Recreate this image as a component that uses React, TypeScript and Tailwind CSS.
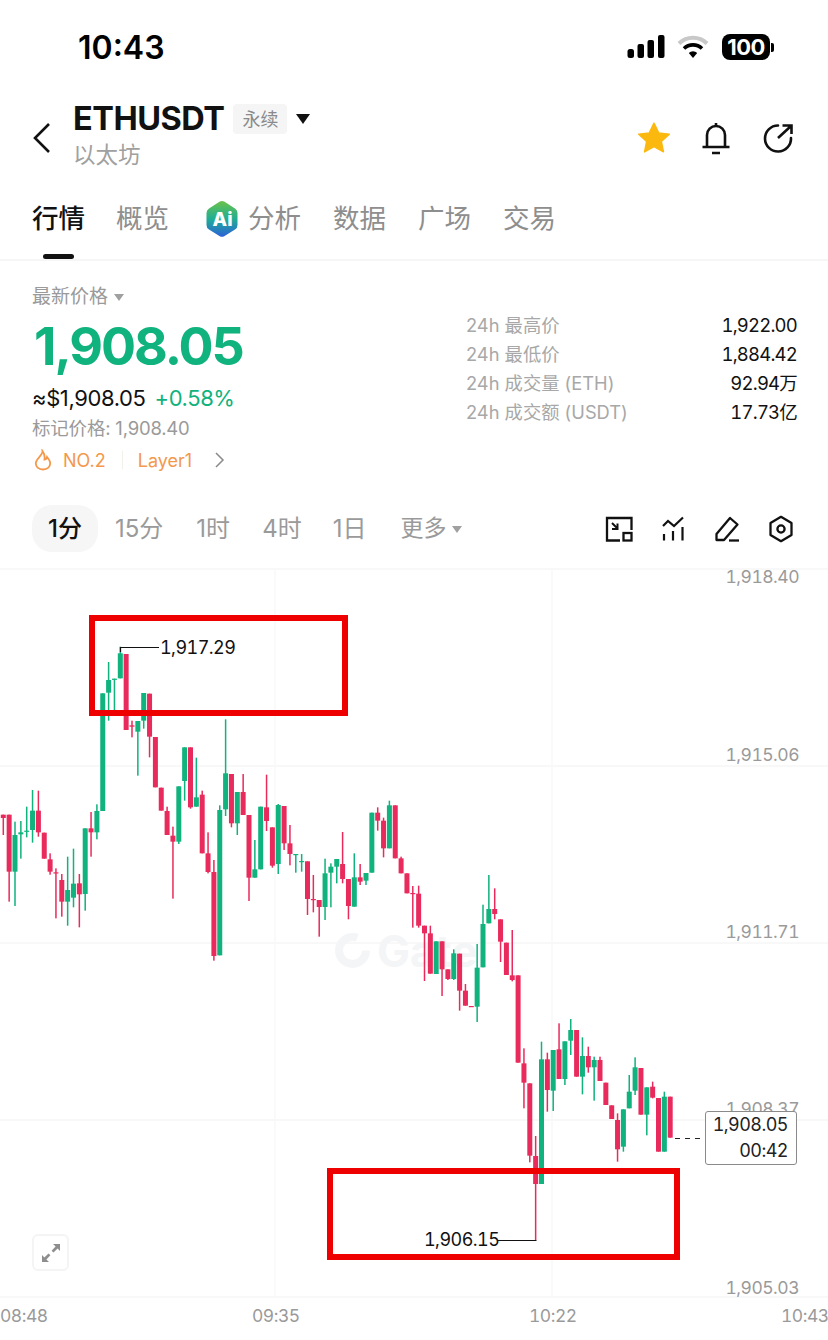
import React from "react";

type C = [string, number, number, number?, number?];
const a: C[] = [
["r",644,654,644,705],["r",644,815,644,905],["g",705,815,665,918],["g",697,703,663,776],["g",692,694,620,712],["g",632,690,570,728],["r",632,697,572,710],["r",698,776],["r",778,815,760,824],["r",817,820,805,955],["r",840,905,822,950],["g",870,905,770,977],["g",851,893,746,922],["r",850,883,822,982],["g",685,882,685,932],["r",685,697,636,770],["g",633,697,613,718],["g",280,633],["g",240,278,186,362],["g",236,238,236,340],["g",160,235,140,235],["r",162,390],["r",376,380,362,412],["g",363,395,363,527],["g",279,362,279,386],["r",281,410,281,472],["r",411,562],["r",563,632],["r",633,705,620,705],["r",707,725,680,896],["g",559,725,559,732],["g",442,543,442,602],["r",442,622,442,626],["g",592,620,473,620],["r",584,760,572,760],["r",760,816,697,820],["r",816,1068,780,1082],["g",630,1066,616,1066],["g",520,628,358,648],["r",522,670,522,682],["g",576,670,576,705],["r",576,645,522,645],["r",645,833,645,903],["g",808,833,720,833],["g",620,808],["r",622,663,524,693],["r",682,797,682,803],
];
const b: C[] = [
["g",75,252,72,282],["r",78,190,78,210],["r",190,222,135,256],["g",222,224,222,278],["g",243,246,222,275],["r",244,357,244,405],["r",357,360,285,397],["r",360,381,360,470],["g",280,381,236,420],["g",260,278,250,382],["g",237,260,237,310],["r",252,297,156,310],["r",297,378,297,418],["g",292,380,220,380],["r",292,305,252,315],["g",279,302,279,315],["g",98,278],["r",98,122,82,152],["r",122,205,113,232],["g",76,205,62,205],["r",76,235],["r",235,280,230,280],["r",280,340],["r",339,341,318,443],["r",341,437,317,443],["r",437,460,437,603],["r",460,581,437,581],["g",484,582],["r",484,568,484,648],["r",568,597,568,600],["g",520,597,508,600],["r",521,632,521,692],["r",632,677,612,677],["r",678,681],["g",563,680,492,726],["g",432,562,374,562],["g",387,430,285,430],["r",387,402,325,418],["r",418,485,418,546],["r",488,585],["r",586,600,450,604],
];
const c: C[] = [
["r",-74,188],["r",190,248,145,325],["r",250,467,250,487],["r",468,552,408,720],["g",178,552,125,552],["r",178,270,158,335],["g",150,272,150,333],["r",148,237,70,237],["g",124,237,124,255],["g",90,122,57,165],["r",90,230],["g",168,230,112,283],["r",168,202,140,218],["g",180,202,170,302],["r",180,243,170,243],["r",248,315],["r",316,357],["r",360,448,340,485],["g",328,440,328,455],["g",275,325,225,325],["g",202,272,172,285],["r",204,344],["g",262,344,262,406],["r",260,293,245,295],["r",294,455],["g",290,455,275,455],["r",290,413],
];
const scale = (list: C[], base: number) =>
  list.map(([k, t, bt, wt, wb]) => ({
    k,
    t: base + t / 3,
    b: base + bt / 3,
    wt: base + (wt ?? t) / 3,
    wb: base + (wb ?? bt) / 3,
  }));
const candles = [...scale(a, 600), ...scale(b, 780), ...scale(c, 1000)];

const GREEN = "#10b27d";
const RED = "#e82b5c";

function Chart() {
  return (
    <svg width="828" height="774" viewBox="0 566 828 774" className="block">
      {[569, 766, 943, 1120, 1297].map((y) => (
        <line key={y} x1="0" x2="828" y1={y} y2={y} stroke="#f6f6f6" strokeWidth="1.5" />
      ))}
      {[275, 552].map((x) => (
        <line key={x} x1={x} x2={x} y1="569" y2="1297" stroke="#f9f9f9" strokeWidth="1.5" />
      ))}
      <circle cx="352.5" cy="950.5" r="13.5" fill="none" stroke="#f4f5f6" strokeWidth="8" strokeDasharray="68 17" />
      <text x="377" y="967" fontSize="44" fontWeight="700" fill="#f4f5f6" fontFamily="Inter, sans-serif">Gate</text>
      {candles.map((d, i) => {
        const x = 3.3 + 5.85 * i;
        const col = d.k === "g" ? GREEN : RED;
        return (
          <g key={i} fill={col}>
            <rect x={x - 0.75} y={d.wt} width="1.5" height={Math.max(d.wb - d.wt, 0.5)} />
            <rect x={x - 2.5} y={d.t} width="5" height={Math.max(d.b - d.t, 1.2)} />
          </g>
        );
      })}
      <path d="M120.5 652V647.5H159" fill="none" stroke="#111" strokeWidth="1.2" />
      <path d="M498 1240.5H536.5" fill="none" stroke="#111" strokeWidth="1.2" />
      <line x1="675" x2="705" y1="1138.5" y2="1138.5" stroke="#222" strokeWidth="1.1" strokeDasharray="5 5" />
    </svg>
  );
}

function AiLogo() {
  return (
    <svg width="36" height="38" viewBox="0 0 36 38">
      <defs>
        <linearGradient id="ai" x1="0" y1="0" x2="0" y2="1">
          <stop offset="0" stopColor="#6cc24a" />
          <stop offset="0.5" stopColor="#1fae94" />
          <stop offset="1" stopColor="#2c62d8" />
        </linearGradient>
      </defs>
      <path d="M15.8 1.6 Q18 0.6 20.2 1.6 L31 8.5 Q33.5 10 33.5 13 V25 Q33.5 28 31 29.5 L20.2 36.2 Q18 37.4 15.8 36.2 L5 29.5 Q2.5 28 2.5 25 V13 Q2.5 10 5 8.5 Z" fill="url(#ai)" />
      <text x="8.5" y="26" fontSize="19" fontWeight="800" fill="#fff" fontFamily="Inter, sans-serif">Ai</text>
    </svg>
  );
}

function Tri({ cls }: { cls: string }) {
  return <span className={`inline-block border-x-transparent border-t-solid ${cls}`} />;
}

const Stat = ({ l, v }: { l: string; v: string }) => (
  <div className="flex h-[29px] items-center justify-between">
    <span className="text-[18.3px] text-[#a8a8a8]">{l}</span>
    <span className="text-[18.5px] tabular-nums tracking-[-0.8px] text-[#111]">{v}</span>
  </div>
);

const Axis = ({ cls, t }: { cls: string; t: string }) => (
  <span className={`absolute text-[17.5px] leading-[22px] tabular-nums tracking-[-0.5px] text-[#9a9a9a] ${cls}`}>{t}</span>
);

export default function App() {
  return (
    <div className="relative h-[1340px] w-[828px] overflow-hidden bg-white font-[Inter,'Noto_Sans_CJK_SC',sans-serif]">
      <div className="flex h-[94px] items-center justify-between pl-[78px] pr-[54px]">
        <span className="pt-[2px] text-[32px] font-semibold leading-none text-black">10:43</span>
        <div className="flex items-center">
          <svg width="38" height="24" viewBox="0 0 38 24" className="mr-[12px]">
            <rect x="0.5" y="14" width="6.5" height="9" rx="2.5" />
            <rect x="10.5" y="9" width="6.5" height="14" rx="2" />
            <rect x="20.5" y="5" width="6.5" height="18" rx="2" />
            <rect x="31" y="0" width="6.5" height="23" rx="2" />
          </svg>
          <svg width="32" height="24" viewBox="0 0 32 24" className="mr-[13px]">
            <path d="M2 8.5 A20 20 0 0 1 30 8.5" fill="none" stroke="#c8c8c8" strokeWidth="4" />
            <path d="M7 13.5 A13 13 0 0 1 25 13.5" fill="none" stroke="#000" strokeWidth="3.6" />
            <path d="M11.8 18 A6 6 0 0 1 20.2 18 L16 23 Z" fill="#000" />
          </svg>
          <div className="flex h-[26px] w-[48px] items-center justify-center rounded-[8px] bg-black text-[22px] font-bold leading-none tracking-[-0.5px] text-white">100</div>
          <div className="ml-[1px] h-[9px] w-[3px] rounded-r-[2px] bg-black" />
        </div>
      </div>

      <div className="flex h-[92px] items-start">
        <svg width="20" height="32" viewBox="0 0 20 32" className="ml-[32px] mt-[28px] text-[#111]">
          <path d="M17 2 L3 16 L17 30" fill="none" stroke="currentColor" strokeWidth="2.6" />
        </svg>
        <div className="ml-[21px] flex flex-col">
          <div className="flex h-[50px] items-center">
            <span className="text-[32.5px] font-bold leading-none tracking-[-0.5px] text-[#111]">ETHUSDT</span>
            <span className="ml-[9px] flex h-[30px] w-[54px] items-center justify-center rounded-[4px] bg-[#f5f5f5] text-[18px] text-[#8a8a8a]">永续</span>
            <Tri cls="ml-[9px] border-x-[7px] border-t-[10px] border-t-[#111]" />
          </div>
          <span className="text-[22.5px] leading-[22px] text-[#a0a0a0]">以太坊</span>
        </div>
        <div className="ml-auto mr-[35px] mt-[27px] flex items-center">
          <svg width="34" height="34" viewBox="0 0 24 24" className="mr-[30px]">
            <path d="M12 1.5 L15.3 8.4 L22.8 9.3 L17.2 14.4 L18.7 21.8 L12 18.1 L5.3 21.8 L6.8 14.4 L1.2 9.3 L8.7 8.4 Z" fill="#fbb80f" stroke="#fbb80f" strokeLinejoin="round" />
          </svg>
          <svg width="30" height="34" viewBox="0 0 30 34" className="mr-[32px]">
            <path d="M6 26 V14 a9 9 0 0 1 18 0 V26" fill="none" stroke="#111" strokeWidth="2.6" />
            <path d="M1.5 26 H28.5 M11 32 H19 M15 5 V2" fill="none" stroke="#111" strokeWidth="2.6" />
          </svg>
          <svg width="30" height="30" viewBox="0 0 30 30">
            <path d="M28 15 A13 13 0 1 1 15 2.5" fill="none" stroke="#111" strokeWidth="2.6" strokeLinecap="round" />
            <path d="M15 15 L28 3 M19.5 2.5 H28.5 V11" fill="none" stroke="#111" strokeWidth="2.6" />
          </svg>
        </div>
      </div>

      <div className="relative flex h-[75px] items-center border-b-2 border-[#f6f6f6] pb-[8px] pl-[32px] text-[26.5px] leading-none text-[#8e8e8e]">
        <span className="font-medium text-[#111]">行情</span>
        <span className="ml-[31px]">概览</span>
        <span className="ml-[35px] mr-[8px]"><AiLogo /></span>
        <span>分析</span>
        <span className="ml-[32px]">数据</span>
        <span className="ml-[32px]">广场</span>
        <span className="ml-[32px]">交易</span>
        <div className="absolute bottom-[0px] left-[43px] h-[5px] w-[31px] rounded-[3px] bg-[#111]" />
      </div>

      <div className="flex h-[244px]">
        <div className="ml-[32px] flex w-[300px] flex-col">
          <div className="mt-[24px] flex h-[24px] items-center text-[19px] text-[#9a9a9a]">
            最新价格
            <Tri cls="ml-[6px] mt-[1px] border-x-[5.5px] border-t-[7px] border-t-[#a0a0a0]" />
          </div>
          <div className="ml-[2px] mt-[10px] h-[56px] text-[52px] font-bold leading-[56px] tracking-[-2px] text-[#10b27d]">1,908.05</div>
          <div className="mt-[9px] flex h-[28px] items-center text-[22px] tracking-[-0.4px]">
            <span className="text-[#111]">≈$1,908.05</span>
            <span className="ml-[9px] text-[#10b27d]">+0.58%</span>
          </div>
          <div className="mt-[3px] h-[26px] text-[18.5px] leading-[26px] tracking-[-0.2px] text-[#9a9a9a]">标记价格: 1,908.40</div>
          <div className="mt-[5px] flex h-[28px] items-center text-[18px] text-[#f4984c]">
            <svg width="20" height="22" viewBox="0 0 20 22" className="ml-[1px]">
              <path d="M9.5 2 C10 6 4 9 3 13 C2 18 6 20.5 10 20.5 C14 20.5 18 18 17 13 C16.5 10.5 15 9.5 14 8 C13.5 10 12.5 10.5 11.5 10.5 C12 7 11 4 9.5 2 Z" fill="none" stroke="#f4984c" strokeWidth="1.8" />
            </svg>
            <span className="ml-[10px]">NO.2</span>
            <span className="ml-[16px] h-[18px] w-px bg-[#f3efe9]" />
            <span className="ml-[15px]">Layer1</span>
            <svg width="12" height="18" viewBox="0 0 12 18" className="ml-[22px]">
              <path d="M2 2 L9 9 L2 16" fill="none" stroke="#8a8a8a" strokeWidth="1.5" />
            </svg>
          </div>
        </div>
        <div className="ml-[134px] mt-[50px] w-[331px]">
          <Stat l="24h 最高价" v="1,922.00" />
          <Stat l="24h 最低价" v="1,884.42" />
          <Stat l="24h 成交量 (ETH)" v="92.94万" />
          <Stat l="24h 成交额 (USDT)" v="17.73亿" />
        </div>
      </div>

      <div className="flex h-[47px] items-center pl-[32px] text-[24px] leading-none text-[#9a9a9a]">
        <span className="flex h-[47px] w-[66px] items-center justify-center rounded-[20px] bg-[#f6f6f6] font-medium text-[#111]">1分</span>
        <span className="ml-[17px]">15分</span>
        <span className="ml-[33px]">1时</span>
        <span className="ml-[32px]">4时</span>
        <span className="ml-[31px]">1日</span>
        <span className="ml-[34px] text-[23px]">更多</span>
        <Tri cls="ml-[6px] mt-[1px] border-x-[5.5px] border-t-[7px] border-t-[#a0a0a0]" />
        <div className="ml-auto mr-[33px] flex items-center gap-[26px]">
          <svg width="28" height="28" viewBox="0 0 28 28" fill="none" stroke="#111" strokeWidth="2.3">
            <path d="M15 25.5 H2 V3 H26.5 V15" />
            <rect x="18.5" y="18" width="8" height="7.5" />
            <path d="M7 8 L12.5 13.5 M7 14 H12.5 V8.5" strokeWidth="2" />
          </svg>
          <svg width="28" height="28" viewBox="0 0 28 28" fill="none" stroke="#111" strokeWidth="2.2">
            <path d="M4 11 L9 6 L15 11 L24 2.5" />
            <path d="M5 19 V25.5 M14 16 V25.5 M23.5 12 V25.5" />
          </svg>
          <svg width="28" height="28" viewBox="0 0 28 28" fill="none" stroke="#111" strokeWidth="2.3">
            <path d="M3.5 25 V19 L17 3 L24.5 9.5 L11 25 H3.5 Z" strokeLinejoin="round" />
            <path d="M16 25.5 H26" />
          </svg>
          <svg width="28" height="28" viewBox="0 0 28 28" fill="none" stroke="#111" strokeWidth="2.3">
            <path d="M14 1.8 L24.5 8 V20 L14 26.2 L3.5 20 V8 Z" strokeLinejoin="round" />
            <circle cx="14" cy="14" r="3.6" />
          </svg>
        </div>
      </div>

      <div className="relative mt-[14px] h-[774px]">
        <Chart />
        <Axis cls="right-[29px] top-[0px]" t="1,918.40" />
        <Axis cls="right-[29px] top-[178px]" t="1,915.06" />
        <Axis cls="right-[29px] top-[355px]" t="1,911.71" />
        <Axis cls="right-[29px] top-[532px]" t="1,908.37" />
        <Axis cls="right-[29px] top-[711px]" t="1,905.03" />
        <Axis cls="left-[0px] top-[739px]" t="08:48" />
        <Axis cls="left-[252px] top-[739px]" t="09:35" />
        <Axis cls="left-[529px] top-[739px]" t="10:22" />
        <Axis cls="left-[781px] top-[739px]" t="10:43" />

        <div className="absolute left-[89px] top-[49px] h-[101px] w-[259px] border-[6px] border-[#ee0000]" />
        <div className="absolute left-[327px] top-[602px] h-[92px] w-[353px] border-[6px] border-[#ee0000]" />
        <span className="absolute left-[160px] top-[71px] text-[18px] leading-[22px] tabular-nums tracking-[-0.55px] text-[#111]">1,917.29</span>
        <span className="absolute left-[424px] top-[663px] text-[18px] leading-[22px] tabular-nums tracking-[-0.55px] text-[#111]">1,906.15</span>

        <div className="absolute left-[705px] top-[545px] flex h-[54px] w-[92px] flex-col items-end justify-center rounded-[3px] border border-[#8a8a8a] bg-white pr-[8px] text-[18px] leading-[26px] tabular-nums tracking-[-0.55px] text-[#222]">
          <span>1,908.05</span>
          <span>00:42</span>
        </div>

        <div className="absolute left-[32px] top-[668px] flex h-[37px] w-[37px] items-center justify-center rounded-[6px] border-2 border-[#f4f4f4] bg-white">
          <svg width="20" height="20" viewBox="0 0 20 20" fill="#8e8e8e">
            <path d="M12 1 H19 V8 L16.6 5.6 L12.5 9.6 L10.6 7.7 L14.6 3.4 Z" />
            <path d="M8 19 H1 V12 L3.4 14.4 L7.5 10.4 L9.4 12.3 L5.4 16.6 Z" />
          </svg>
        </div>
      </div>
    </div>
  );
}
